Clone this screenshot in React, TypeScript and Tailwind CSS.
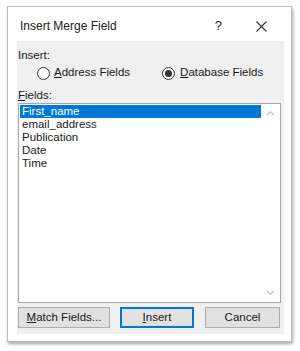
import React from "react";

const font = { fontFamily: '"Liberation Sans", Arial, sans-serif' };

function Radio({ checked }: { checked?: boolean }) {
  return (
    <span className="flex h-[13px] w-[13px] items-center justify-center rounded-full border border-[#333] bg-white">
      {checked && <span className="h-[7px] w-[7px] rounded-full bg-[#333]" />}
    </span>
  );
}

export default function App() {
  const items = ["First_name", "email_address", "Publication", "Date", "Time"];
  return (
    <div className="h-[351px] w-[300px] bg-white pl-[7px] pt-[6px] text-[11.5px] text-[#1a1a1a]" style={font}>
      <div className="flex h-[336px] w-[285px] flex-col border border-[#bdbdbd] bg-white shadow-[1px_2px_3px_rgba(0,0,0,0.35)]">
        <div className="flex h-[34px] items-center pl-[12px] pt-[4px] text-[12px] text-[#222]">
          <span>Insert Merge Field</span>
          <span className="ml-[98px] text-[13px]">?</span>
          <svg className="ml-[34px]" width="11" height="11" viewBox="0 0 11 11">
            <path d="M0.5 0.5 L10.5 10.5 M10.5 0.5 L0.5 10.5" stroke="#333" strokeWidth="1.1" />
          </svg>
        </div>
        <div className="mb-[7px] ml-[9px] mr-[7px] flex flex-1 flex-col bg-[#f0f0f0] px-[1px] pt-[7px]">
          <div className="h-[14px] leading-[14px]">Insert:</div>
          <div className="mt-[3px] flex h-[16px] items-center">
            <span className="ml-[19px]"><Radio /></span>
            <span className="ml-[4px]"><span className="underline">A</span>ddress Fields</span>
            <span className="ml-[32px]"><Radio checked /></span>
            <span className="ml-[5px]"><span className="underline">D</span>atabase Fields</span>
          </div>
          <div className="mt-[7px] h-[14px] leading-[14px]"><span className="underline">F</span>ields:</div>
          <div className="mt-[1px] flex h-[200px] w-[263px] border border-[#a8a8a8] bg-white">
            <div className="flex flex-1 flex-col pl-[1px] pt-[1px]">
              {items.map((it, i) => (
                <div
                  key={it}
                  className={
                    "h-[13px] pl-[2px] leading-[13px] " +
                    (i === 0 ? "bg-[#0078d7] text-white" : "")
                  }
                >
                  {it}
                </div>
              ))}
            </div>
            <div className="flex w-[19px] flex-col items-center justify-between py-[6px]">
              <svg width="9" height="6" viewBox="0 0 9 6">
                <path d="M1 5 L4.5 1.5 L8 5" stroke="#c2c2c2" strokeWidth="1.2" fill="none" />
              </svg>
              <svg width="9" height="6" viewBox="0 0 9 6">
                <path d="M1 1 L4.5 4.5 L8 1" stroke="#c2c2c2" strokeWidth="1.2" fill="none" />
              </svg>
            </div>
          </div>
          <div className="mt-[4px] flex h-[21px]">
            <button className="h-full w-[92px] border border-[#adadad] bg-[#e1e1e1] text-[11.5px]">
              <span className="underline">M</span>atch Fields...
            </button>
            <button className="ml-[10px] h-full w-[74px] border-2 border-[#0078d7] bg-[#e1e1e1] text-[11.5px]">
              <span className="underline">I</span>nsert
            </button>
            <button className="ml-[11px] h-full w-[75px] border border-[#adadad] bg-[#e1e1e1] text-[11.5px]">
              Cancel
            </button>
          </div>
        </div>
      </div>
    </div>
  );
}
